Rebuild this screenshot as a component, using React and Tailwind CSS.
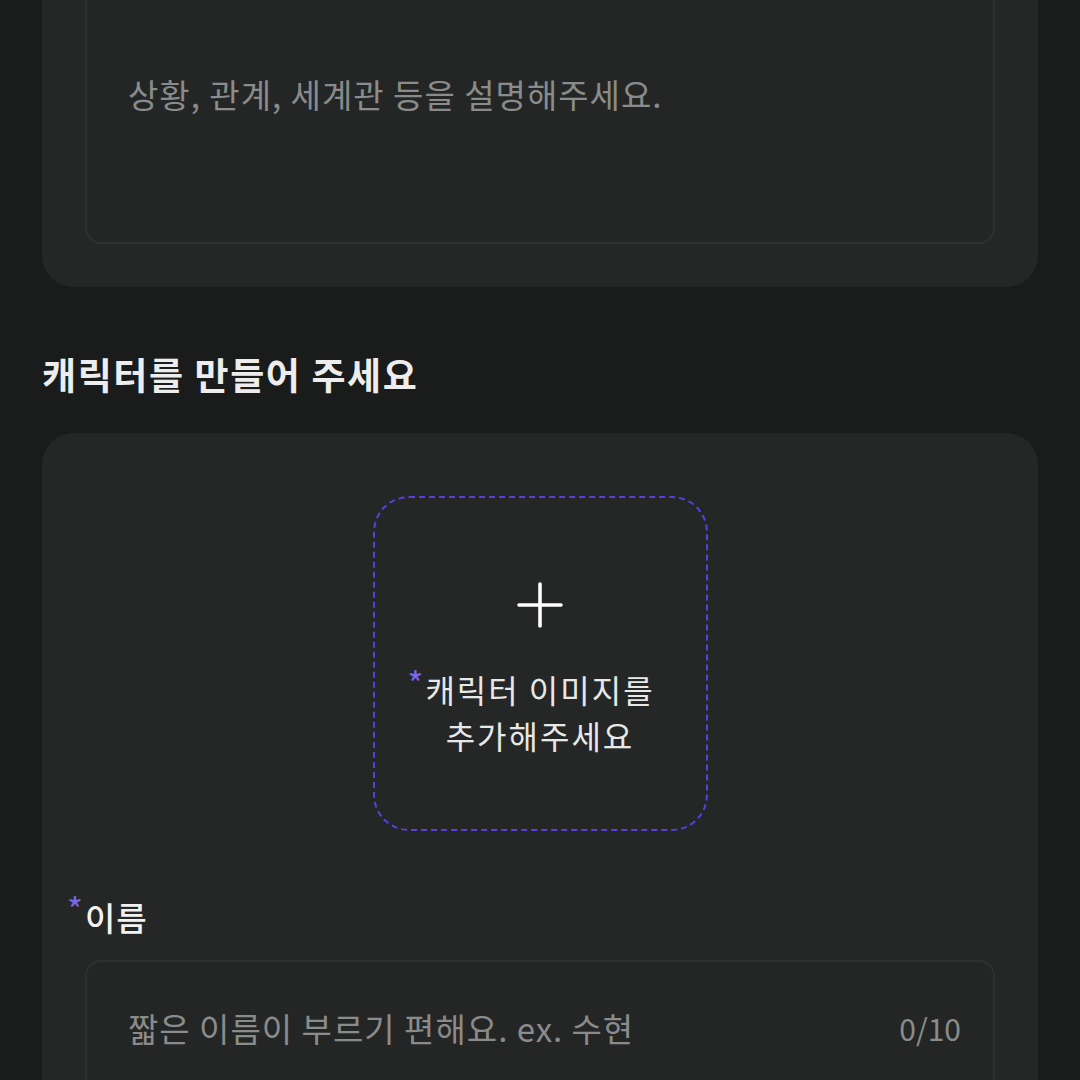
import React from 'react';

const font = { fontFamily: '"Noto Sans CJK KR", "Noto Sans", sans-serif' };

function Asterisk({ className = '' }) {
  return <span className={`text-[34px] font-normal leading-none text-[#7a66ee] ${className}`}>*</span>;
}

function PlusIcon() {
  return (
    <svg width="46" height="46" viewBox="0 0 46 46" fill="none">
      <path d="M23 2v42M2 23h42" stroke="#ffffff" strokeWidth="3.6" strokeLinecap="round" />
    </svg>
  );
}

export default function App() {
  return (
    <div className="h-[1080px] overflow-hidden bg-[#1a1c1c] px-[42px]" style={font}>
      {/* scenario card, cut off at the top */}
      <div className="-mt-[100px] rounded-[32px] bg-[#252727] p-[43px]">
        <div className="h-[301px] rounded-[16px] border-2 border-[#2f3131] bg-[#242626] px-[41px] pt-[127px]">
          <p className="text-[33px] leading-[45px] tracking-[1px] text-[#8a8b8b]">
            상황, 관계, 세계관 등을 설명해주세요.
          </p>
        </div>
      </div>

      <h2 className="mt-[63px] text-[37px] font-bold leading-[48px] tracking-[1.6px] text-[#ededed]">
        캐릭터를 만들어 주세요
      </h2>

      {/* character card */}
      <div className="mt-[35px] rounded-[32px] bg-[#252727] px-[43px] pt-[63px] pb-[40px]">
        <div className="flex justify-center">
          <button className="flex h-[335px] w-[335px] flex-col items-center rounded-[36px] border-2 border-dashed border-[#5a3fdc] pt-[84px]">
            <PlusIcon />
            <p className="mt-[38px] text-center text-[32px] leading-[46px] tracking-[2px] text-[#e8e8e8]">
              <span className="relative">
                <Asterisk className="absolute -left-[18px] top-[0px]" />
                캐릭터 이미지를
              </span>
              <br />
              추가해주세요
            </p>
          </button>
        </div>

        <div className="mt-[64px]">
          <label className="relative block text-[33px] font-medium leading-[44px] tracking-[1px] text-[#f2f2f2]">
            <Asterisk className="absolute -left-[18px] -top-[3px]" />
            이름
          </label>
          <div className="mt-[21px] flex h-[150px] items-start justify-between rounded-[16px] border-2 border-[#2f3131] bg-[#242626] pl-[41px] pr-[32px] pt-[44px]">
            <span className="text-[33px] leading-[45px] tracking-[1px] text-[#8a8b8b]">
              짧은 이름이 부르기 편해요. ex. 수현
            </span>
            <span className="text-[30px] leading-[45px] text-[#8a8b8b]">0/10</span>
          </div>
        </div>
      </div>
    </div>
  );
}
